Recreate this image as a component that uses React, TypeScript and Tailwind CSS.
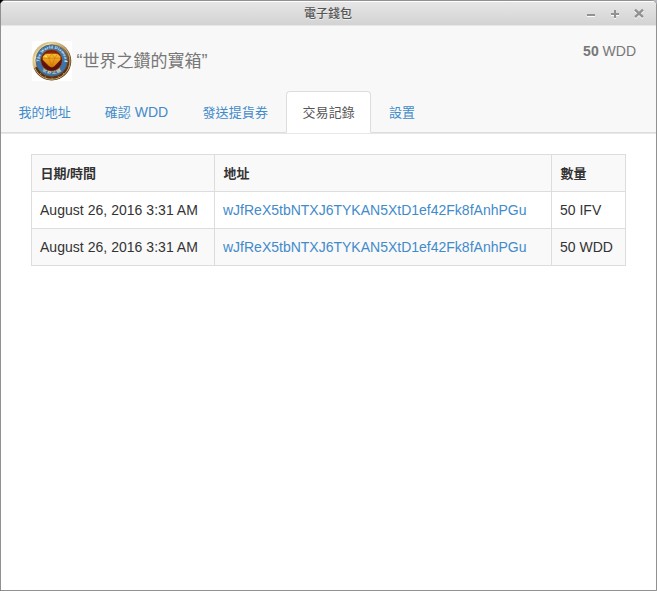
import type { ReactNode } from 'react';

function Han({ children }: { children: ReactNode }) {
  return <span className="text-[13px] tracking-[0.1px]">{children}</span>;
}

function Logo() {
  return (
    <svg width="40" height="40" viewBox="0 0 40 40" className="block shrink-0 bg-white">
      <defs>
        <linearGradient id="rim" x1="0" y1="0" x2="1" y2="1">
          <stop offset="0" stopColor="#8f7847" />
          <stop offset=".25" stopColor="#f3e7b8" />
          <stop offset=".5" stopColor="#a68450" />
          <stop offset=".75" stopColor="#5c3516" />
          <stop offset="1" stopColor="#b99458" />
        </linearGradient>
        <radialGradient id="ruby" cy="0.35">
          <stop offset="0" stopColor="#b53c0a" />
          <stop offset="1" stopColor="#5a100c" />
        </radialGradient>
        <linearGradient id="gem" x1="0" y1="0" x2="0" y2="1">
          <stop offset="0" stopColor="#f9bd30" />
          <stop offset="1" stopColor="#d87806" />
        </linearGradient>
        <path id="upper" d="M8.2 24.5 A12.6 12.6 0 1 1 31.8 24.5" />
        <path id="lower" d="M5.5 23 A15.6 15.6 0 0 0 34.5 23" />
      </defs>
      <circle cx="19.7" cy="20" r="19.6" fill="url(#rim)" />
      <path d="M2 27 A19 19 0 0 0 37.4 27 L33 25 A15 15 0 0 1 7 25Z" fill="#5a3014" />
      <circle cx="19.7" cy="20" r="18.3" fill="none" stroke="#d8bd7f" strokeWidth=".9" />
      <circle cx="19.7" cy="19.5" r="15.8" fill="#3a74ac" stroke="#6b5436" strokeWidth=".7" />
      <text fill="#dbe7ee" fontSize="4.4" fontWeight="bold" letterSpacing=".15" fontFamily="Liberation Serif, serif">
        <textPath href="#upper" startOffset="50%" textAnchor="middle">The World Diamond</textPath>
      </text>
      <text fill="#dfd2ac" fontSize="4.5" fontWeight="bold" letterSpacing=".8" fontFamily="Noto Sans CJK TC, sans-serif">
        <textPath href="#lower" startOffset="50%" textAnchor="middle">世界之鑽</textPath>
      </text>
      <circle cx="19.5" cy="19.3" r="10.8" fill="url(#ruby)" stroke="#a8772f" strokeWidth=".5" />
      <path d="M13.5 12.8h12l3 2.7v3.2l-6.2 6.6-2.5 1.2-2.6-1.2-6.5-6.6v-3.2z" fill="url(#gem)" />
      <path d="M11 17.2h17.3M13.5 12.8l3.3 4.4 2.8 8.6 3.2-8.6 2.7-4.4M16.8 17.2l3-4.4 3 4.4" fill="none" stroke="#bd6d07" strokeWidth=".45" />
      <path d="M12 16l2-2.3 2 2.9z" fill="#ffe05f" />
      <path d="M8 32l1 1.3M13 35.2l.7 1.3M20 36.6v1.4M27 35.2l-.7 1.3M32 32l-1 1.3" stroke="#e0b56d" strokeWidth=".7" />
    </svg>
  );
}

const tabs = [
  { label: <Han>我的地址</Han>, cls: 'w-[86px] border-transparent pl-[15.5px] text-[#428bca]' },
  { label: <><Han>確認</Han> WDD</>, cls: 'w-[98px] border-transparent pl-[15.7px] text-[#428bca]' },
  { label: <Han>發送提貨券</Han>, cls: 'w-[100px] border-transparent pl-[15.5px] text-[#428bca]' },
  { label: <Han>交易記錄</Han>, cls: 'w-[85px] mr-[2px] border-[#dddddd] border-b-white rounded-t-[4px] bg-white pl-[15.5px] text-[#555555]' },
  { label: <Han>設置</Han>, cls: 'w-[60px] border-transparent pl-[15px] text-[#428bca]' },
];

const rows = ['50 IFV', '50 WDD'];
const address = 'wJfReX5tbNTXJ6TYKAN5XtD1ef42Fk8fAnhPGu';

export default function App() {
  return (
    <div className="h-[591px] w-[657px] overflow-hidden bg-[linear-gradient(90deg,#000_0_50%,#b8b8c4_50%)] font-['Liberation_Sans','Noto_Sans_CJK_TC',sans-serif] text-[14px] leading-[20px] text-[#333333]">
      <div className="flex h-full flex-col overflow-hidden rounded-t-[5px] border border-[#919191] bg-white">
        <div className="flex h-[25px] shrink-0 border-t border-b border-t-white border-b-[#e7e7e7] bg-linear-to-b from-[#e6e6e6] to-[#d3d3d3]">
          <div className="w-[100px]" />
          <div className="flex-1 pr-[1px] pt-[2px] text-center text-[12px] leading-[20px] font-medium text-[#555555] [text-shadow:0_1px_0_#eeeeee]">電子錢包</div>
          <svg width="100" height="23" viewBox="0 0 100 23" fill="none">
            <g stroke="#fafafa" strokeWidth="2">
              <path d="M31 14h8M55 13h8M59 9v8" />
              <path d="M79 8.5l8 7.5M87 8.5l-8 7.5" strokeWidth="2.4" />
            </g>
            <g stroke="#929292" strokeWidth="2">
              <path d="M31 13h8M55 12h8M59 8v8" />
              <path d="M79 7.7l8 7.5M87 7.7l-8 7.5" strokeWidth="2.4" />
            </g>
          </svg>
        </div>

        <header className="flex h-[108px] shrink-0 flex-col border-b border-[#e7e7e7] bg-[#f8f8f8]">
          <div className="flex h-[65px] pr-5 pl-[31px] text-[#777777]">
            <div className="pt-[15px]"><Logo /></div>
            <div className="ml-[4.5px] pt-[25px] text-[18px] leading-[20px] whitespace-nowrap">“<span className="text-[17px]">世界之鑽的寶箱</span>”</div>
            <div className="ml-auto pt-[15px]"><b>50</b> WDD</div>
          </div>
          <nav className="flex h-[42px] border-b border-[#dddddd] pl-[1px]">
            {tabs.map((tab, i) => (
              <a key={i} className={`h-[42px] shrink-0 border pt-[10px] whitespace-nowrap ${tab.cls}`}>{tab.label}</a>
            ))}
          </nav>
        </header>

        <main className="pt-5 pl-[30px]">
          <table className="w-[594px] table-fixed border-collapse text-left">
            <colgroup><col className="w-[183px]" /><col className="w-[337px]" /><col className="w-[74px]" /></colgroup>
            <thead>
              <tr className="h-[37px] bg-[#f9f9f9]">
                {['日期/時間', '地址', '數量'].map((heading) => (
                  <th key={heading} className="border border-[#dddddd] pt-[1px] pr-0 pb-0 pl-[8.5px] text-[13px] font-bold">{heading}</th>
                ))}
              </tr>
            </thead>
            <tbody>
              {rows.map((amount) => (
                <tr key={amount} className="h-[37px] even:bg-[#f9f9f9]">
                  <td className="border border-[#dddddd] px-2 py-0 tracking-[0.03px]">August 26, 2016 3:31 AM</td>
                  <td className="border border-[#dddddd] px-2 py-0 text-[#428bca]">{address}</td>
                  <td className="border border-[#dddddd] px-2 py-0">{amount}</td>
                </tr>
              ))}
            </tbody>
          </table>
        </main>
      </div>
    </div>
  );
}
